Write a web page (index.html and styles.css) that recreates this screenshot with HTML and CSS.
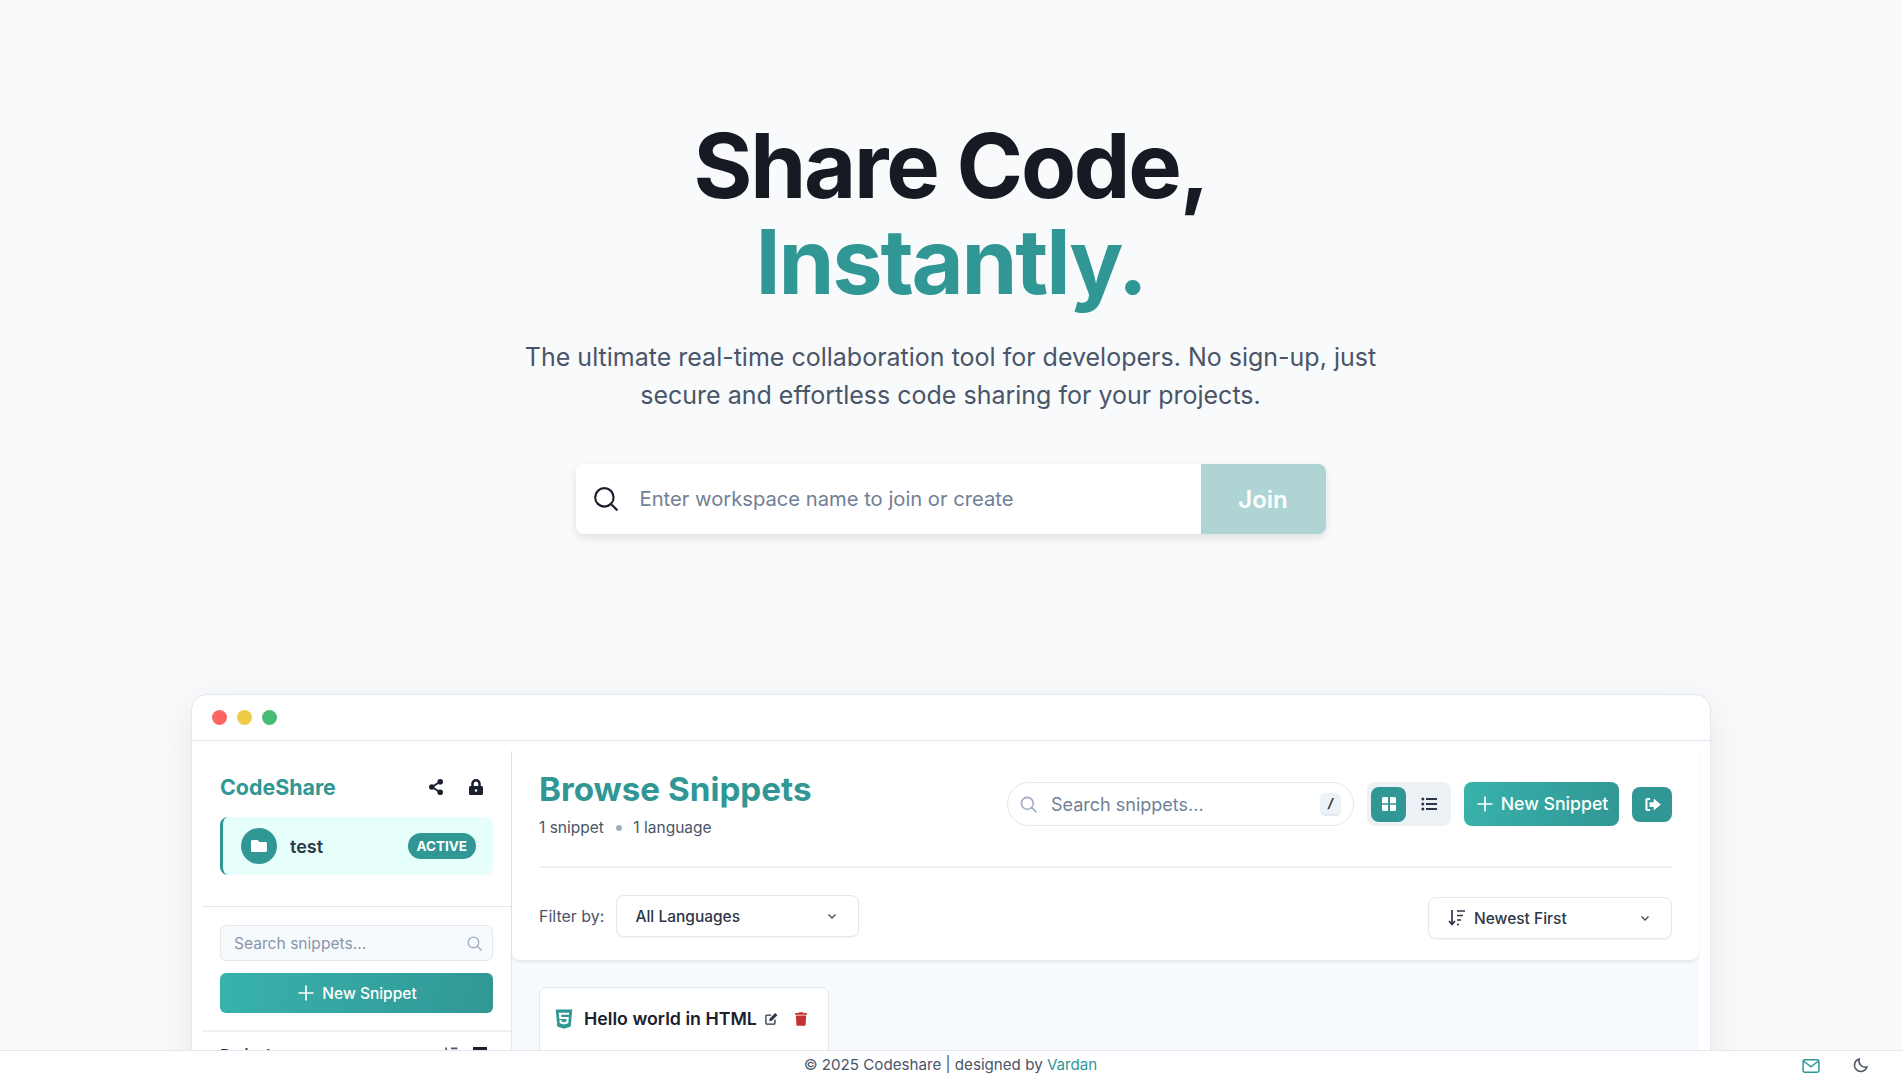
FILE: index.html
```html
<!DOCTYPE html>
<html lang="en">
  <head>
    <meta charset="UTF-8" />
    <title>Codeshare</title>
    <link rel="stylesheet" href="styles.css">
  </head>
  <body>
    <section class="hero">
      <h1>Share Code,<br /><span class="accent">Instantly.</span></h1>
      <p class="lead">The ultimate real-time collaboration tool for developers. No sign-up, just secure and effortless code sharing for your projects.</p>
      <form class="join">
        <svg class="join-icon" viewBox="0 0 24 24"><circle cx="10.5" cy="10.500" r="8.500"/><path d="M17 17l5.500 5.500"/></svg>
        <span class="join-input">Enter workspace name to join or create</span>
        <span class="join-btn">Join</span>
      </form>
    </section>

    <section class="window">
      <div class="titlebar">
        <span class="dot red"></span>
        <span class="dot yellow"></span>
        <span class="dot green"></span>
      </div>
      <div class="app">
        <aside class="sidebar">
          <div class="side-top">
            <div class="brand-row">
              <span class="brand">CodeShare</span>
              <svg class="ico-share" viewBox="0 0 14 16"><circle cx="11.200" cy="2.800" r="2.800"/><circle cx="2.800" cy="8" r="2.800"/><circle cx="11.200" cy="13.200" r="2.800"/><path class="share-line" d="M11.200 2.800L2.800 8l8.400 5.200"/></svg>
              <svg class="ico-lock" viewBox="0 0 448 512"><path d="M400 224h-24v-72C376 68 308 0 224 0S72 68 72 152v72H48c-26 0-48 22-48 48v192c0 26 22 48 48 48h352c26 0 48-22 48-48V272c0-26-22-48-48-48zm-104 0H152v-72c0-40 32-72 72-72s72 32 72 72v72z"/><circle cx="224" cy="368" r="40" fill="#fff"/></svg>
            </div>
            <div class="workspace">
              <span class="ws-icon"><svg viewBox="0 0 512 512"><path d="M464 128H272l-64-64H48C21 64 0 85 0 112v288c0 27 21 48 48 48h416c27 0 48-21 48-48V176c0-27-21-48-48-48z"/></svg></span>
              <span class="ws-name">test</span>
              <span class="ws-badge">ACTIVE</span>
            </div>
          </div>
          <div class="side-actions">
            <div class="side-search">
              <span>Search snippets...</span>
              <svg viewBox="0 0 24 24"><circle cx="10.500" cy="10.500" r="7.500"/><path d="M16 16l6 6"/></svg>
            </div>
            <div class="side-new">
              <svg viewBox="0 0 24 24"><path d="M12 3v18M3 12h18"/></svg>
              <span>New Snippet</span>
            </div>
          </div>
          <div class="side-projects">
            <span class="projects-label">Projects</span>
            <svg class="ico-sort-small" viewBox="0 0 20 20"><path d="M4 2v16M10 3h8M10 8h6"/></svg>
            <span class="collapse-bar"></span>
          </div>
        </aside>

        <main class="main">
          <header class="main-head">
            <div class="head-top">
              <div class="head-title">
                <h2>Browse Snippets</h2>
                <div class="stats">
                  <span>1 snippet</span>
                  <span class="stat-dot"></span>
                  <span>1 language</span>
                </div>
              </div>
              <div class="head-tools">
                <div class="pill-search">
                  <svg viewBox="0 0 24 24"><circle cx="10.500" cy="10.500" r="7.500"/><path d="M16 16l6 6"/></svg>
                  <span class="pill-text">Search snippets...</span>
                  <kbd>/</kbd>
                </div>
                <div class="view-toggle">
                  <span class="view-btn active"><svg viewBox="0 0 16 16"><path d="M1 2.500A1.500 1.500 0 0 1 2.500 1H7v6.300H1zM9 1h4.500A1.500 1.500 0 0 1 15 2.500v4.800H9zM1 8.700h6V15H2.500A1.500 1.500 0 0 1 1 13.500zM9 8.700h6v4.800a1.500 1.500 0 0 1-1.500 1.500H9z"/></svg></span>
                  <span class="view-btn"><svg viewBox="0 0 16 16"><circle cx="1.800" cy="3" r="1.500"/><circle cx="1.800" cy="8" r="1.500"/><circle cx="1.800" cy="13" r="1.500"/><path d="M5 2h11v2H5zM5 7h11v2H5zM5 12h11v2H5z"/></svg></span>
                </div>
                <div class="new-btn">
                  <svg viewBox="0 0 24 24"><path d="M12 3v18M3 12h18"/></svg>
                  <span>New Snippet</span>
                </div>
                <div class="exit-btn">
                  <svg viewBox="0 0 16 16"><path d="M6 2.500H3.500A1.500 1.500 0 0 0 2 4v8a1.500 1.500 0 0 0 1.500 1.500H6v-1.700H3.800V4.200H6z"/><path d="M9 3L15 8l-6 5v-3H5.500V6H9z"/></svg>
                </div>
              </div>
            </div>
            <div class="filters">
              <span class="filter-label">Filter by:</span>
              <div class="select lang-select">
                <span>All Languages</span>
                <svg class="chev" viewBox="0 0 12 12"><path d="M2.500 4.500L6 8l3.500-3.500"/></svg>
              </div>
              <div class="select sort-select">
                <svg class="sort-icon" viewBox="0 0 20 20"><path d="M5 2v14M2 13l3 3.500L8 13M10 3h8M10 7.500h6M10 12h4M10 16.500h2"/></svg>
                <span>Newest First</span>
                <svg class="chev" viewBox="0 0 12 12"><path d="M2.500 4.500L6 8l3.500-3.500"/></svg>
              </div>
            </div>
          </header>
          <div class="cards">
            <article class="card">
              <div class="card-head">
                <svg class="ico-html" viewBox="0 0 384 512"><path fill-rule="evenodd" d="M0 32l34.900 395.800L192 480l157.100-52.200L384 32H0zm308.200 127.900H124.400l4.100 49.400h175.600l-13.600 148.400-97.900 27v.300h-1.100l-98.700-27.300-6-75.800h47.700L138 320l53.500 14.500 53.700-14.500 6-62.200H84.300L71.500 112.200h241.100l-4.400 47.700z"/></svg>
                <h3>Hello world in HTML</h3>
                <svg class="ico-edit" viewBox="0 0 16 16"><path d="M12.500 8.500v4.300a1 1 0 0 1-1 1h-8.300a1 1 0 0 1-1-1V4.500a1 1 0 0 1 1-1h5" fill="none" stroke="currentColor" stroke-width="1.500"/><path d="M6 10.500l.5-3L12.800 1.200l2.500 2.500L9 10z"/></svg>
                <svg class="ico-trash" viewBox="0 0 448 512"><path d="M432 32H312l-9-19A24 24 0 0 0 281 0H167a24 24 0 0 0-22 13l-9 19H16A16 16 0 0 0 0 48v32a16 16 0 0 0 16 16h416a16 16 0 0 0 16-16V48a16 16 0 0 0-16-16zM53 467a48 48 0 0 0 48 45h246a48 48 0 0 0 48-45l21-339H32z"/></svg>
              </div>
            </article>
          </div>
        </main>
      </div>
    </section>

    <footer class="footer">
      <span class="footer-text">© 2025 Codeshare | designed by <a class="footer-link">Vardan</a></span>
      <div class="footer-icons">
        <svg class="ico-mail" viewBox="0 0 24 24"><rect x="2.500" y="4.500" width="19" height="15" rx="2"/><path d="M3 6l9 7 9-7"/></svg>
        <svg class="ico-moon" viewBox="0 0 24 24"><path d="M20 14.500A8.500 8.500 0 0 1 9.500 4a8.500 8.500 0 1 0 10.500 10.500z"/></svg>
      </div>
    </footer>
  </body>
</html>
```

FILE: styles.css
```css
* {
  box-sizing: border-box;
}
html,
body {
  height: 100%;
}
body {
  margin: 0;
  overflow: hidden;
  background-color: #f8fafc;
  font-family: Inter, "Liberation Sans", sans-serif;
  color: #1a202c;
}
svg {
  display: block;
  flex: none;
}

/* Hero */
.hero {
  display: flex;
  flex-direction: column;
  align-items: center;
  padding: 118px 2px 0 0;
  text-align: center;
}
h1 {
  margin: 0;
  font-size: 90px;
  line-height: 96px;
  font-weight: 700;
  letter-spacing: -2.250px;
  color: #171a23;
}
.accent {
  color: #319795;
}
.lead {
  width: 896px;
  margin: 28px 0 0;
  font-size: 25px;
  line-height: 38px;
  color: #4a5568;
}
.join {
  display: flex;
  align-items: center;
  width: 750px;
  height: 70px;
  margin-top: 50px;
  background-color: #fff;
  border-radius: 8px;
  overflow: hidden;
  box-shadow: 0 4px 8px rgba(0, 0, 0, 0.1);
}
.join-icon {
  width: 26px;
  height: 26px;
  margin-left: 17px;
  fill: none;
  stroke: #1a202c;
  stroke-width: 2;
}
.join-input {
  flex: 1;
  margin-left: 21px;
  padding-bottom: 2px;
  text-align: left;
  font-size: 20.200px;
  color: #718096;
}
.join-btn {
  display: flex;
  align-items: center;
  justify-content: center;
  width: 125px;
  height: 100%;
  background-color: #aed5d4;
  color: #fff;
  font-size: 24px;
  font-weight: 600;
}

/* Preview window */
.window {
  width: 1520px;
  height: 700px;
  margin: 160px 0 0 191px;
  background-color: #fff;
  border: 1px solid #e2e8f0;
  border-radius: 16px;
  box-shadow: 0 10px 40px rgba(0, 0, 0, 0.08);
  overflow: hidden;
}
.titlebar {
  display: flex;
  align-items: center;
  gap: 10px;
  height: 46px;
  padding-left: 20px;
  border-bottom: 1px solid #e2e8f0;
}
.dot {
  width: 15px;
  height: 15px;
  border-radius: 50%;
}
.red {
  background-color: #fc6565;
}
.yellow {
  background-color: #eecb47;
}
.green {
  background-color: #48bb78;
}
.app {
  display: flex;
  height: 100%;
  margin: 10px 0 0 10px;
}
.sidebar {
  width: 310px;
  flex: none;
  background-color: #fff;
  border-right: 1px solid #e2e8f0;
}
.side-top {
  height: 156px;
  padding: 16px 18px 0;
  border-bottom: 1px solid #e2e8f0;
}
.brand-row {
  display: flex;
  align-items: center;
  height: 39px;
}
.brand {
  flex: 1;
  font-size: 21.400px;
  font-weight: 700;
  color: #319795;
}
.ico-share {
  width: 14px;
  height: 16px;
  fill: #1a202c;
}
.share-line {
  fill: none;
  stroke: #1a202c;
  stroke-width: 1.800;
}
.ico-lock {
  width: 14px;
  height: 16px;
  margin: 0 10px 0 26px;
  fill: #1a202c;
}
.workspace {
  display: flex;
  align-items: center;
  height: 58px;
  margin-top: 11px;
  padding: 0 17px 0 18px;
  background-color: #e6fffa;
  border-left: 3px solid #319795;
  border-radius: 8px;
}
.ws-icon {
  display: flex;
  align-items: center;
  justify-content: center;
  width: 36px;
  height: 36px;
  background-color: #319795;
  border-radius: 50%;
}
.ws-icon svg {
  width: 16px;
  height: 16px;
  fill: #fff;
}
.ws-name {
  flex: 1;
  margin-left: 13px;
  font-size: 18px;
  font-weight: 600;
  color: #2d3748;
}
.ws-badge {
  padding: 5px 9px 5px 8px;
  background-color: #319795;
  border-radius: 13px;
  color: #fff;
  font-size: 13.500px;
  line-height: 16px;
  font-weight: 700;
}
.side-actions {
  height: 125px;
  padding: 18px 18px 0;
  border-bottom: 2px solid #edf2f7;
}
.side-search {
  display: flex;
  align-items: center;
  justify-content: space-between;
  height: 36px;
  padding: 0 9px 0 13px;
  background-color: #f7fafc;
  border: 1px solid #e2e8f0;
  border-radius: 6px;
  font-size: 15.600px;
  color: #8a96a8;
}
.side-search svg {
  width: 17px;
  height: 17px;
  fill: none;
  stroke: #a0aec0;
  stroke-width: 2;
}
.side-new {
  display: flex;
  align-items: center;
  justify-content: center;
  gap: 6px;
  height: 40px;
  margin-top: 12px;
  background: linear-gradient(100deg, #38b2ac, #319795);
  border-radius: 6px;
  color: #fff;
  font-size: 15.500px;
  font-weight: 500;
}
.side-new svg {
  width: 20px;
  height: 20px;
  fill: none;
  stroke: #fff;
  stroke-width: 2;
}
.side-projects {
  display: flex;
  align-items: flex-start;
  padding: 14px 18px 0;
  color: #2d3748;
}
.projects-label {
  flex: 1;
  font-size: 15px;
  line-height: 18px;
  font-weight: 600;
}
.ico-sort-small {
  width: 16px;
  height: 16px;
  fill: none;
  stroke: #4a5568;
  stroke-width: 2;
}
.collapse-bar {
  width: 14px;
  height: 3px;
  margin: 1px 6px 0 14px;
  background-color: #1a202c;
}

.main {
  flex: none;
  width: 1187px;
  background-color: #f7fafc;
}
.main-head {
  height: 209px;
  padding: 18px 26px 0 27px;
  background-color: #fff;
  border-radius: 0 0 8px 8px;
  box-shadow: 0 2px 3px rgba(0, 0, 0, 0.08);
}
.head-top {
  display: flex;
  align-items: flex-start;
  justify-content: space-between;
  height: 99px;
  border-bottom: 2px solid #edf2f7;
}
h2 {
  margin: 0;
  font-size: 33.200px;
  line-height: 40px;
  font-weight: 700;
  color: #319795;
}
.stats {
  display: flex;
  align-items: center;
  margin-top: 9px;
  font-size: 15.500px;
  line-height: 20px;
  color: #4a5568;
}
.stat-dot {
  width: 6px;
  height: 6px;
  margin: 0 11.500px 0 12px;
  background-color: #a0aec0;
  border-radius: 50%;
}
.head-tools {
  display: flex;
  align-items: center;
  margin: 13px 1px 0 0;
}
.pill-search {
  display: flex;
  align-items: center;
  width: 347px;
  height: 44px;
  padding: 0 12px 0 11px;
  background-color: #fff;
  border: 1px solid #e2e8f0;
  border-radius: 22px;
}
.pill-search svg {
  width: 19px;
  height: 19px;
  fill: none;
  stroke: #a0aec0;
  stroke-width: 2;
}
.pill-text {
  flex: 1;
  margin-left: 13px;
  font-size: 18px;
  color: #718096;
}
kbd {
  width: 21px;
  height: 23px;
  background-color: #edf2f7;
  border-bottom: 2px solid #e2e8f0;
  border-radius: 5px;
  text-align: center;
  font: italic 700 13px/21px Inter, sans-serif;
  color: #2d3748;
}
.view-toggle {
  display: flex;
  align-items: center;
  gap: 5px;
  height: 44px;
  margin-left: 13px;
  padding: 0 5px 0 4px;
  background-color: #edf2f7;
  border-radius: 8px;
}
.view-btn {
  display: flex;
  align-items: center;
  justify-content: center;
  width: 35px;
  height: 35px;
  border-radius: 8px;
}
.view-btn svg {
  width: 16px;
  height: 16px;
  fill: #2d3748;
}
.view-btn.active {
  background-color: #319795;
}
.view-btn.active svg {
  fill: #fff;
}
.new-btn {
  display: flex;
  align-items: center;
  justify-content: center;
  gap: 6px;
  width: 155px;
  height: 44px;
  margin-left: 13px;
  padding-bottom: 1px;
  background: linear-gradient(100deg, #38b2ac, #319795);
  border-radius: 8px;
  color: #fff;
  font-size: 17.700px;
  font-weight: 500;
}
.new-btn svg {
  width: 20px;
  height: 20px;
  fill: none;
  stroke: #fff;
  stroke-width: 2;
}
.exit-btn {
  display: flex;
  align-items: center;
  justify-content: center;
  width: 40px;
  height: 35px;
  margin-left: 13px;
  background-color: #319795;
  border-radius: 8px;
}
.exit-btn svg {
  width: 19px;
  height: 19px;
  fill: #fff;
}
.filters {
  display: flex;
  align-items: flex-start;
  padding-top: 27px;
}
.filter-label {
  font-size: 16px;
  line-height: 42px;
  color: #4a5568;
}
.select {
  display: flex;
  align-items: center;
  height: 42px;
  background-color: #fff;
  border: 1px solid #e2e8f0;
  border-radius: 8px;
  box-shadow: 0 1px 2px rgba(0, 0, 0, 0.05);
  font-size: 15.500px;
  font-weight: 500;
  color: #2d3748;
}
.select span {
  flex: 1;
}
.lang-select {
  width: 243px;
  margin: 0 auto 0 12px;
  padding: 0 20px 0 18px;
}
.sort-select {
  width: 244px;
  margin: 2px 1px 0 0;
  padding: 0 20px 0 18px;
}
.chev {
  width: 12px;
  height: 12px;
  fill: none;
  stroke: #4a5568;
  stroke-width: 1.500;
}
.sort-icon {
  width: 20px;
  height: 20px;
  margin-right: 7px;
  fill: none;
  stroke: #2d3748;
  stroke-width: 1.700;
}
.cards {
  padding: 27px 27px;
}
.card {
  width: 290px;
  height: 200px;
  padding: 20px 15px;
  background-color: #fff;
  border: 1px solid #e2e8f0;
  border-radius: 8px;
}
.card-head {
  display: flex;
  align-items: center;
}
.ico-html {
  width: 18px;
  height: 22px;
  fill: #319795;
}
h3 {
  margin: 0 0 0 11px;
  font-size: 17.800px;
  line-height: 22px;
  font-weight: 600;
  color: #1a202c;
  white-space: nowrap;
}
.ico-edit {
  width: 14px;
  height: 14px;
  margin-left: 7px;
  fill: #2d3748;
  color: #2d3748;
}
.ico-trash {
  width: 12px;
  height: 14px;
  margin-left: 17px;
  fill: #c53030;
}

/* Fixed footer */
.footer {
  position: fixed;
  left: 0;
  right: 0;
  bottom: 0;
  display: flex;
  align-items: center;
  justify-content: center;
  height: 30px;
  padding: 0 2px 2px 0;
  background-color: #fff;
  border-top: 1px solid #e2e8f0;
  font-size: 15.150px;
  color: #4a5568;
}
.footer-link {
  color: #319795;
}
.footer-icons {
  position: absolute;
  right: 33px;
  top: 5px;
  display: flex;
  gap: 31px;
}
.ico-mail {
  width: 20px;
  height: 20px;
  fill: none;
  stroke: #319795;
  stroke-width: 1.800;
}
.ico-moon {
  width: 18px;
  height: 18px;
  fill: none;
  stroke: #4a5568;
  stroke-width: 2;
}
```
